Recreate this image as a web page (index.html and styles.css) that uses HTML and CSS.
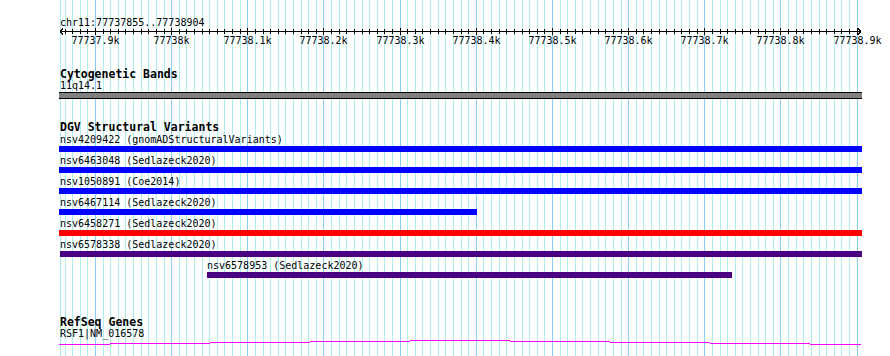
FILE: index.html
```html
<!DOCTYPE html>
<html lang="en">
<head>
  <meta charset="UTF-8" />
  <title>chr11:77737855..77738904</title>
  <link rel="stylesheet" href="styles.css">
</head>
<body>
  <div class="browser">
    <svg class="grid" id="grid" width="890" height="356"></svg>

    <div class="panel">
      <div class="locus">chr11:77737855..77738904</div>
      <svg class="ruler" id="ruler" width="803" height="20"></svg>

      <section class="track track-bands">
        <h2 class="track-title">Cytogenetic Bands</h2>
        <div class="feature-label">11q14.1</div>
        <div class="band"></div>
      </section>

      <section class="track track-dgv">
        <h2 class="track-title">DGV Structural Variants</h2>
        <div class="feature">
          <div class="feature-label">nsv4209422 (gnomADStructuralVariants)</div>
          <div class="bar bar-loss" style="margin-left:0;width:803px"></div>
        </div>
        <div class="feature">
          <div class="feature-label">nsv6463048 (Sedlazeck2020)</div>
          <div class="bar bar-loss" style="margin-left:0;width:803px"></div>
        </div>
        <div class="feature">
          <div class="feature-label">nsv1050891 (Coe2014)</div>
          <div class="bar bar-loss" style="margin-left:0;width:803px"></div>
        </div>
        <div class="feature">
          <div class="feature-label">nsv6467114 (Sedlazeck2020)</div>
          <div class="bar bar-loss" style="margin-left:0;width:418px"></div>
        </div>
        <div class="feature">
          <div class="feature-label">nsv6458271 (Sedlazeck2020)</div>
          <div class="bar bar-gain" style="margin-left:0;width:803px"></div>
        </div>
        <div class="feature">
          <div class="feature-label">nsv6578338 (Sedlazeck2020)</div>
          <div class="bar bar-other" style="margin-left:1px;width:802px"></div>
        </div>
        <div class="feature">
          <div class="feature-label" style="margin-left:147px">nsv6578953 (Sedlazeck2020)</div>
          <div class="bar bar-other" style="margin-left:148px;width:525px"></div>
        </div>
      </section>

      <section class="track track-genes">
        <h2 class="track-title">RefSeq Genes</h2>
        <div class="feature-label">RSF1|NM_016578</div>
        <svg class="gene" id="gene" width="803" height="8"></svg>
      </section>
    </div>
  </div>

  <script>
    const NS = 'http://www.w3.org/2000/svg';
    const viewStart = 77737855;
    const pxPerBp = 0.76166;
    const trackLeft = 59;

    function xOf(bp) {
      return 60.7 + (bp - viewStart) * pxPerBp;
    }

    function line(svg, x1, y1, x2, y2, cls) {
      const l = document.createElementNS(NS, 'line');
      l.setAttribute('x1', x1);
      l.setAttribute('y1', y1);
      l.setAttribute('x2', x2);
      l.setAttribute('y2', y2);
      l.setAttribute('class', cls);
      svg.appendChild(l);
    }

    // grade de fundo + régua
    const grid = document.getElementById('grid');
    const ruler = document.getElementById('ruler');
    line(grid, 60.5, 0, 60.5, 356, 'grid-minor');
    line(ruler, 1, 3.5, 802, 3.5, 'rule');
    line(ruler, 1, 3.5, 4, 0.5, 'rule');
    line(ruler, 1, 3.5, 4, 6.5, 'rule');
    line(ruler, 802, 3.5, 799, 0.5, 'rule');
    line(ruler, 802, 3.5, 799, 6.5, 'rule');

    for (let bp = 77737860; bp <= 77738900; bp += 10) {
      const x = Math.round(xOf(bp)) + 0.5;
      const major = bp % 100 === 0;
      line(grid, x, 0, x, 356, major ? 'grid-major' : 'grid-minor');
      const rx = x - trackLeft;
      line(ruler, rx, major ? 0 : 1, rx, major ? 7 : 6, 'rule');
      if (major) {
        const t = document.createElementNS(NS, 'text');
        t.setAttribute('x', rx);
        t.setAttribute('y', 16);
        t.setAttribute('class', 'tick-label');
        t.textContent = (bp / 1000).toFixed(1).replace(/\.0$/, '') + 'k';
        ruler.appendChild(t);
      }
    }

    // linha do gene (intron)
    const gene = document.getElementById('gene');
    const steps = [
      [59, 110, 345], [110, 210, 344], [210, 310, 343],
      [310, 410, 342], [410, 510, 341], [510, 610, 342],
      [610, 710, 343], [710, 810, 344], [810, 861, 345]
    ];
    steps.forEach(([a, b, y]) => {
      line(gene, a - trackLeft, y - 340 + 0.5, b - trackLeft, y - 340 + 0.5, 'intron');
    });
  </script>
</body>
</html>
```

FILE: styles.css
```css
body {
  margin: 0;
  background: #fff;
  font-family: "DejaVu Sans Mono", "Liberation Mono", monospace;
  font-size: 10px;
  color: #000;
}
.browser {
  position: relative;
  width: 890px;
  height: 356px;
  overflow: hidden;
}
.grid {
  position: absolute;
  top: 0;
  left: 0;
  shape-rendering: crispEdges;
}
.grid-minor {
  stroke: #aeeeee;
  stroke-width: 1;
}
.grid-major {
  stroke: #87cefa;
  stroke-width: 1;
}
.panel {
  position: relative;
  padding-left: 59px;
  width: 803px;
}
.locus {
  padding-top: 17px;
  padding-left: 1px;
  line-height: 11px;
}
.ruler {
  display: block;
  overflow: visible;
  shape-rendering: crispEdges;
}
.rule {
  stroke: #000;
  stroke-width: 1;
}
.tick-label {
  font-family: "DejaVu Sans Mono", "Liberation Mono", monospace;
  font-size: 10px;
  text-anchor: middle;
  fill: #000;
}
.track-title {
  margin: 0;
  padding-left: 1px;
  font-size: 11.5px;
  font-weight: bold;
  line-height: 12px;
}
.feature-label {
  padding-left: 1px;
  line-height: 11px;
  white-space: nowrap;
}
.track-bands {
  margin-top: 20px;
}
.band {
  margin-top: 1px;
  height: 5px;
  background: #808080;
  border-top: 1px solid #000;
  border-bottom: 1px solid #000;
}
.track-dgv {
  margin-top: 22px;
}
.track-dgv .track-title {
  margin-bottom: 1px;
}
.feature {
  height: 21px;
}
.bar {
  margin-top: 1px;
  height: 6px;
}
.bar-loss {
  background: #0000ff;
}
.bar-gain {
  background: #ff0000;
}
.bar-other {
  background: #4b0082;
}
.track-genes {
  margin-top: 35px;
}
.gene {
  display: block;
  shape-rendering: crispEdges;
}
.intron {
  stroke: #ff00ff;
  stroke-width: 1;
}
```
